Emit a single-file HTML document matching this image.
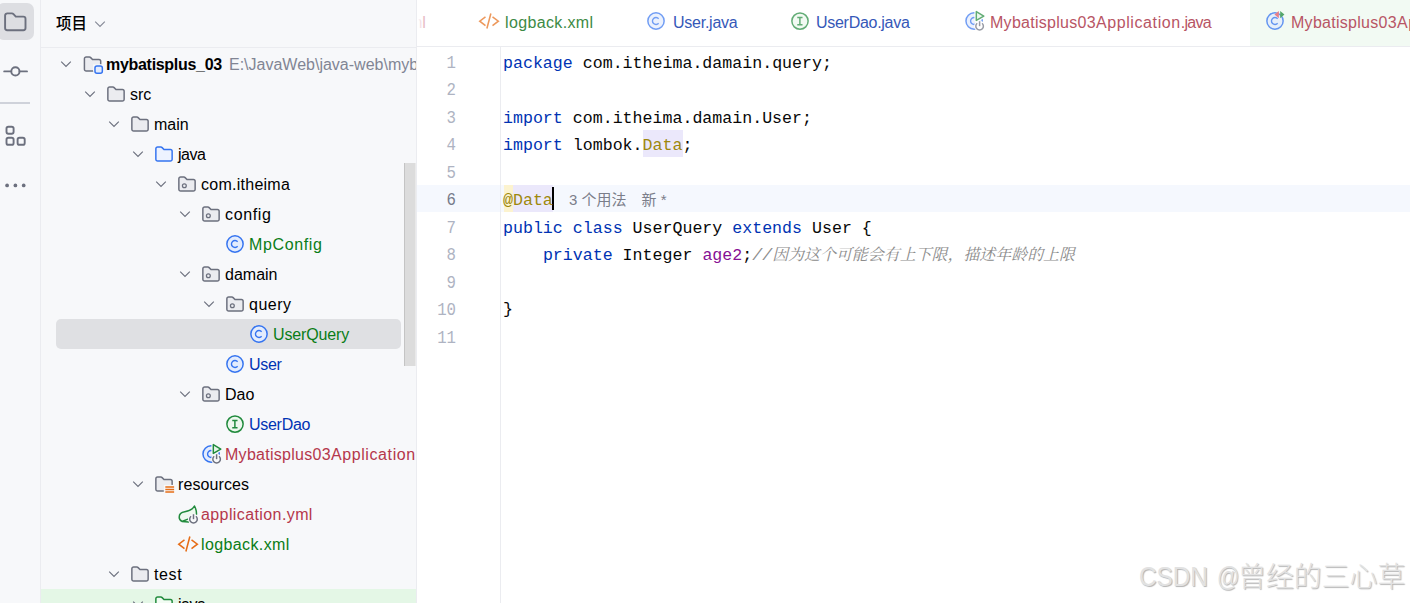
<!DOCTYPE html>
<html><head><meta charset="utf-8"><title>IDE</title>
<style>
*{box-sizing:border-box;margin:0;padding:0}
html,body{width:1410px;height:603px;overflow:hidden;background:#fff}
body{position:relative;font-family:"Liberation Sans","Noto Sans CJK SC",sans-serif;}
.ic{position:absolute;overflow:visible}
#strip{position:absolute;left:0;top:0;width:41px;height:603px;background:#f7f8fa;border-right:1px solid #ebecf0}
#proj{position:absolute;left:41px;top:0;width:376px;height:603px;background:#f7f8fa;border-right:1px solid #ebecf0;overflow:hidden}
#projhead{position:absolute;left:0;top:0;width:376px;height:48px;border-bottom:1px solid #ebecf0}
#ed{position:absolute;left:417px;top:0;width:993px;height:603px;background:#fff;overflow:hidden}
.t{position:absolute;white-space:nowrap;font-size:16px;line-height:30px;height:30px;letter-spacing:0px}
.code{position:absolute;white-space:pre;font-family:"Liberation Mono","Noto Sans CJK SC",monospace;font-size:16.62px;line-height:27.5px;height:27.5px;left:503px;color:#080808}
.ln{position:absolute;width:40px;text-align:right;font-family:"Liberation Mono",monospace;font-size:15.7px;line-height:28px;height:28px;left:416px;color:#aeb3c2;transform:scaleY(1.16);transform-origin:50% 50%}
.kw{color:#0033b3}.an{color:#9e880d}.fld{color:#871094}.cm{color:#8c8c8c;font-style:italic}.cj{font-family:"Noto Serif CJK SC",serif;font-size:15.95px;-webkit-text-stroke:0;line-height:0}
.tab{position:absolute;top:0;height:46px;line-height:45px;font-size:16px;white-space:nowrap}
</style></head><body>

<div id="strip"></div>
<div style="position:absolute;left:-3px;top:3px;width:37px;height:37px;border-radius:7px;background:#dddee2"></div>
<svg class="ic" style="left:0;top:0" width="41" height="200" viewBox="0 0 41 200" fill="none" stroke="#6c707e" stroke-width="1.9"><path d="M5.100 15.600 a2.200 2.200 0 0 1 2.200-2.200 h4.600 a2.200 2.200 0 0 1 1.600 0.700 l2.300 2.500 h7.500 a2.200 2.200 0 0 1 2.200 2.200 v9.200 a2.200 2.200 0 0 1-2.200 2.200 h-16 a2.200 2.200 0 0 1-2.200-2.200z"/><path d="M4.200 71.400h7M19.600 71.400h7.400" stroke-linecap="round"/><circle cx="15.400" cy="71.400" r="4.100"/><rect x="6.500" y="126.700" width="7.100" height="7" rx="1.900"/><rect x="6.500" y="137.800" width="7.100" height="7" rx="1.900"/><rect x="17.600" y="137.800" width="7.100" height="7" rx="1.900"/><g fill="#6c707e" stroke="none"><circle cx="7.100" cy="185.400" r="1.850"/><circle cx="15.400" cy="185.400" r="1.850"/><circle cx="23.700" cy="185.400" r="1.850"/></g></svg>
<div style="position:absolute;left:0;top:102px;width:30px;height:2px;background:#cfd2da"></div>
<div id="proj"><div id="projhead"></div>
<div style="position:absolute;left:0;top:589px;width:376px;height:14px;background:#e4f7e6"></div>
<div style="position:absolute;left:15px;top:319px;width:345px;height:30px;border-radius:5px;background:#dfe0e3"></div>
<div style="position:absolute;left:363px;top:163px;width:12px;height:203px;background:#dcdcdc;border-left:1px solid #c4c4c4;border-right:1px solid #e9e9e9"></div>
</div>
<div class="t" style="left:56px;top:9px;color:#000;font-size:15.5px;font-weight:500">项目</div>
<svg class="ic" style="left:92px;top:15.5px" width="16" height="16" viewBox="0 0 16 16"><path d="M3.200 5.700 L8 10.500 L12.800 5.700" fill="none" stroke="#868a97" stroke-width="1.150"/></svg>
<svg class="ic" style="left:58px;top:56px" width="16" height="16" viewBox="0 0 16 16"><path d="M3.200 5.700 L8 10.500 L12.800 5.700" fill="none" stroke="#6c707e" stroke-width="1.150"/></svg>
<svg class="ic" style="left:82px;top:53px;opacity:1" width="22" height="22" viewBox="0 0 20 20"><path d="M10.2 16.300 h-6.400 a1.600 1.600 0 0 1-1.600-1.600 v-9.400 a1.600 1.600 0 0 1 1.600-1.600 h2.900 a1.600 1.600 0 0 1 1.200 0.500 l1.700 1.800 h5.800 a1.600 1.600 0 0 1 1.600 1.600 v2.700" fill="#ebecf0" stroke="#6c707e" stroke-width="1.35"/><path d="M10 16.300v-6h7v6z" fill="#f7f8fa"/><rect x="11.800" y="11.800" width="6.700" height="6.600" rx="1.800" fill="#e3ecfd" stroke="#3574f0" stroke-width="1.35"/></svg>
<div class="t" style="left:106px;top:50px;color:#000;font-weight:bold;letter-spacing:-0.3px;">mybatisplus_03</div>
<svg class="ic" style="left:82px;top:86px" width="16" height="16" viewBox="0 0 16 16"><path d="M3.200 5.700 L8 10.500 L12.800 5.700" fill="none" stroke="#6c707e" stroke-width="1.150"/></svg>
<svg class="ic" style="left:105px;top:83px;opacity:1" width="22" height="22" viewBox="0 0 20 20"><path d="M2.6 5.3 a1.6 1.6 0 0 1 1.6-1.6 h2.9 a1.6 1.6 0 0 1 1.2 0.5 l1.7 1.8 h5.800 a1.600 1.600 0 0 1 1.600 1.600 v7.100 a1.600 1.600 0 0 1-1.600 1.600 h-11.600 a1.600 1.600 0 0 1-1.600-1.600z" fill="#ebecf0" stroke="#6c707e" stroke-width="1.35"/></svg>
<div class="t" style="left:130px;top:80px;color:#000;">src</div>
<svg class="ic" style="left:106px;top:116px" width="16" height="16" viewBox="0 0 16 16"><path d="M3.200 5.700 L8 10.500 L12.800 5.700" fill="none" stroke="#6c707e" stroke-width="1.150"/></svg>
<svg class="ic" style="left:129px;top:113px;opacity:1" width="22" height="22" viewBox="0 0 20 20"><path d="M2.6 5.3 a1.6 1.6 0 0 1 1.6-1.6 h2.9 a1.6 1.6 0 0 1 1.2 0.5 l1.7 1.8 h5.800 a1.600 1.600 0 0 1 1.600 1.600 v7.100 a1.600 1.600 0 0 1-1.600 1.600 h-11.600 a1.600 1.600 0 0 1-1.600-1.600z" fill="#ebecf0" stroke="#6c707e" stroke-width="1.35"/></svg>
<div class="t" style="left:154px;top:110px;color:#000;">main</div>
<svg class="ic" style="left:130px;top:146px" width="16" height="16" viewBox="0 0 16 16"><path d="M3.200 5.700 L8 10.500 L12.800 5.700" fill="none" stroke="#6c707e" stroke-width="1.150"/></svg>
<svg class="ic" style="left:153px;top:143px;opacity:1" width="22" height="22" viewBox="0 0 20 20"><path d="M2.6 5.3 a1.6 1.6 0 0 1 1.6-1.6 h2.9 a1.6 1.6 0 0 1 1.2 0.5 l1.7 1.8 h5.800 a1.600 1.600 0 0 1 1.600 1.600 v7.100 a1.600 1.600 0 0 1-1.600 1.600 h-11.600 a1.600 1.600 0 0 1-1.600-1.600z" fill="#edf3ff" stroke="#3574f0" stroke-width="1.35"/></svg>
<div class="t" style="left:178px;top:140px;color:#000;letter-spacing:-0.5px;">java</div>
<svg class="ic" style="left:153px;top:176px" width="16" height="16" viewBox="0 0 16 16"><path d="M3.200 5.700 L8 10.500 L12.800 5.700" fill="none" stroke="#6c707e" stroke-width="1.150"/></svg>
<svg class="ic" style="left:176px;top:173px;opacity:1" width="22" height="22" viewBox="0 0 20 20"><path d="M2.6 5.3 a1.6 1.6 0 0 1 1.6-1.6 h2.9 a1.6 1.6 0 0 1 1.2 0.5 l1.7 1.8 h5.800 a1.600 1.600 0 0 1 1.600 1.600 v7.100 a1.600 1.600 0 0 1-1.600 1.600 h-11.600 a1.600 1.600 0 0 1-1.600-1.600z" fill="#ebecf0" stroke="#6c707e" stroke-width="1.35"/><circle cx="7.6" cy="11.6" r="1.75" fill="none" stroke="#6c707e" stroke-width="1.15"/></svg>
<div class="t" style="left:201px;top:170px;color:#000;letter-spacing:0.26px;">com.itheima</div>
<svg class="ic" style="left:177px;top:206px" width="16" height="16" viewBox="0 0 16 16"><path d="M3.200 5.700 L8 10.500 L12.800 5.700" fill="none" stroke="#6c707e" stroke-width="1.150"/></svg>
<svg class="ic" style="left:200px;top:203px;opacity:1" width="22" height="22" viewBox="0 0 20 20"><path d="M2.6 5.3 a1.6 1.6 0 0 1 1.6-1.6 h2.9 a1.6 1.6 0 0 1 1.2 0.5 l1.7 1.8 h5.800 a1.600 1.600 0 0 1 1.600 1.600 v7.100 a1.600 1.600 0 0 1-1.600 1.600 h-11.600 a1.600 1.600 0 0 1-1.600-1.600z" fill="#ebecf0" stroke="#6c707e" stroke-width="1.35"/><circle cx="7.6" cy="11.6" r="1.75" fill="none" stroke="#6c707e" stroke-width="1.15"/></svg>
<div class="t" style="left:225px;top:200px;color:#000;letter-spacing:0.65px;">config</div>
<svg class="ic" style="left:224px;top:233px;opacity:1" width="22" height="22" viewBox="0 0 20 20"><circle cx="10" cy="10" r="7.4" fill="#e3ecfd" stroke="#3574f0" stroke-width="1.35"/><path d="M12.400 7.900 a3.200 3.200 0 1 0 0 4.200" fill="none" stroke="#3574f0" stroke-width="1.25"/></svg>
<div class="t" style="left:249px;top:230px;color:#0a7d17;letter-spacing:0.64px;">MpConfig</div>
<svg class="ic" style="left:177px;top:266px" width="16" height="16" viewBox="0 0 16 16"><path d="M3.200 5.700 L8 10.500 L12.800 5.700" fill="none" stroke="#6c707e" stroke-width="1.150"/></svg>
<svg class="ic" style="left:200px;top:263px;opacity:1" width="22" height="22" viewBox="0 0 20 20"><path d="M2.6 5.3 a1.6 1.6 0 0 1 1.6-1.6 h2.9 a1.6 1.6 0 0 1 1.2 0.5 l1.7 1.8 h5.800 a1.600 1.600 0 0 1 1.600 1.600 v7.100 a1.600 1.600 0 0 1-1.600 1.600 h-11.600 a1.600 1.600 0 0 1-1.600-1.600z" fill="#ebecf0" stroke="#6c707e" stroke-width="1.35"/><circle cx="7.6" cy="11.6" r="1.75" fill="none" stroke="#6c707e" stroke-width="1.15"/></svg>
<div class="t" style="left:225px;top:260px;color:#000;">damain</div>
<svg class="ic" style="left:201px;top:296px" width="16" height="16" viewBox="0 0 16 16"><path d="M3.200 5.700 L8 10.500 L12.800 5.700" fill="none" stroke="#6c707e" stroke-width="1.150"/></svg>
<svg class="ic" style="left:224px;top:293px;opacity:1" width="22" height="22" viewBox="0 0 20 20"><path d="M2.6 5.3 a1.6 1.6 0 0 1 1.6-1.6 h2.9 a1.6 1.6 0 0 1 1.2 0.5 l1.7 1.8 h5.800 a1.600 1.600 0 0 1 1.600 1.600 v7.100 a1.600 1.600 0 0 1-1.600 1.600 h-11.600 a1.600 1.600 0 0 1-1.600-1.600z" fill="#ebecf0" stroke="#6c707e" stroke-width="1.35"/><circle cx="7.6" cy="11.6" r="1.75" fill="none" stroke="#6c707e" stroke-width="1.15"/></svg>
<div class="t" style="left:249px;top:290px;color:#000;letter-spacing:0.5px;">query</div>
<svg class="ic" style="left:248px;top:323px;opacity:1" width="22" height="22" viewBox="0 0 20 20"><circle cx="10" cy="10" r="7.4" fill="#e3ecfd" stroke="#3574f0" stroke-width="1.35"/><path d="M12.400 7.900 a3.200 3.200 0 1 0 0 4.200" fill="none" stroke="#3574f0" stroke-width="1.25"/></svg>
<div class="t" style="left:273px;top:320px;color:#0a7d17;letter-spacing:-0.15px;">UserQuery</div>
<svg class="ic" style="left:224px;top:353px;opacity:1" width="22" height="22" viewBox="0 0 20 20"><circle cx="10" cy="10" r="7.4" fill="#e3ecfd" stroke="#3574f0" stroke-width="1.35"/><path d="M12.400 7.900 a3.200 3.200 0 1 0 0 4.200" fill="none" stroke="#3574f0" stroke-width="1.25"/></svg>
<div class="t" style="left:249px;top:350px;color:#0033b3;letter-spacing:-0.3px;">User</div>
<svg class="ic" style="left:177px;top:386px" width="16" height="16" viewBox="0 0 16 16"><path d="M3.200 5.700 L8 10.500 L12.800 5.700" fill="none" stroke="#6c707e" stroke-width="1.150"/></svg>
<svg class="ic" style="left:200px;top:383px;opacity:1" width="22" height="22" viewBox="0 0 20 20"><path d="M2.6 5.3 a1.6 1.6 0 0 1 1.6-1.6 h2.9 a1.6 1.6 0 0 1 1.2 0.5 l1.7 1.8 h5.800 a1.600 1.600 0 0 1 1.600 1.600 v7.100 a1.600 1.600 0 0 1-1.600 1.600 h-11.600 a1.600 1.600 0 0 1-1.600-1.600z" fill="#ebecf0" stroke="#6c707e" stroke-width="1.35"/><circle cx="7.6" cy="11.6" r="1.75" fill="none" stroke="#6c707e" stroke-width="1.15"/></svg>
<div class="t" style="left:225px;top:380px;color:#000;">Dao</div>
<svg class="ic" style="left:224px;top:413px;opacity:1" width="22" height="22" viewBox="0 0 20 20"><circle cx="10" cy="10.100" r="7.400" fill="#edf8ee" stroke="#208a3c" stroke-width="1.35"/><path d="M7.500 6.800h4.800M7.500 13.400h4.800M9.900 6.800v6.600" fill="none" stroke="#208a3c" stroke-width="1.350"/></svg>
<div class="t" style="left:249px;top:410px;color:#0033b3;letter-spacing:-0.28px;">UserDao</div>
<svg class="ic" style="left:200px;top:443px;opacity:1" width="22" height="22" viewBox="0 0 20 20"><circle cx="10.100" cy="10" r="7.400" fill="#e3ecfd" stroke="#3574f0" stroke-width="1.35"/><path d="M12.500 7.900 a3.200 3.200 0 1 0 0 4.200" fill="none" stroke="#3574f0" stroke-width="1.250"/><path d="M12.100 1.400V9.500L18.900 5.500z" fill="#f7f8fa" stroke="#f7f8fa" stroke-width="3.400" stroke-linejoin="round"/><path d="M12.100 1.400V9.500L18.900 5.500z" fill="#e6f5e8" stroke="#208a3c" stroke-width="1.35" stroke-linejoin="round"/><circle cx="15.1" cy="14.7" r="5" fill="#f7f8fa"/><path d="M17.32 12.06 A3.45 3.45 0 1 1 12.88 12.06" fill="none" stroke="#6c707e" stroke-width="1.35"/><path d="M15.1 10.2V14.7" stroke="#6c707e" stroke-width="1.35"/></svg>
<div class="t" style="left:225px;top:440px;color:#b5374b;letter-spacing:0.42px;"><span style="letter-spacing:0.28px">Mybatisplus03</span><span style="letter-spacing:0.6px">Application</span></div>
<svg class="ic" style="left:130px;top:476px" width="16" height="16" viewBox="0 0 16 16"><path d="M3.200 5.700 L8 10.500 L12.800 5.700" fill="none" stroke="#6c707e" stroke-width="1.150"/></svg>
<svg class="ic" style="left:153px;top:473px;opacity:1" width="22" height="22" viewBox="0 0 20 20"><path d="M9.900 16.300 h-5.700 a1.600 1.600 0 0 1-1.600-1.600 v-9.400 a1.600 1.600 0 0 1 1.600-1.600 h2.900 a1.600 1.600 0 0 1 1.200 0.500 l1.700 1.800 h5.800 a1.600 1.600 0 0 1 1.600 1.600 v3.200" fill="#ebecf0" stroke="#6c707e" stroke-width="1.35"/><path d="M9.900 17v-6.200h8v6.200z" fill="#f7f8fa"/><path d="M11.200 12.700h8M11.200 15h8M11.200 17.300h8" stroke="#e66d17" stroke-width="1.35"/></svg>
<div class="t" style="left:178px;top:470px;color:#000;letter-spacing:0.1px;">resources</div>
<svg class="ic" style="left:176px;top:503px;opacity:1" width="22" height="22" viewBox="0 0 20 20"><path d="M16.800 2.700 C15.500 5.500 12 7.300 8 8 C4.500 8.600 2.900 10.800 2.900 12.900 C2.900 14.600 4 16 5.400 16.800 L11.400 17.300 L18 13 C18.600 11 18.500 6 16.800 2.700z" fill="#eef9ef"/><path d="M10.800 14.700 L5.400 16.800 L11.400 17.300 M5.400 16.800 C4 16 2.900 14.600 2.900 12.900 C2.900 10.800 4.500 8.600 8 8 C12 7.300 15.500 5.500 16.800 2.700 C18 5 18.800 7.500 18.600 10.500" fill="none" stroke="#208a3c" stroke-width="1.35" stroke-linejoin="round" stroke-linecap="round"/><circle cx="15.9" cy="14.7" r="5" fill="#f7f8fa"/><path d="M18.12 12.06 A3.45 3.45 0 1 1 13.68 12.06" fill="none" stroke="#6c707e" stroke-width="1.35"/><path d="M15.9 10.2V14.7" stroke="#6c707e" stroke-width="1.35"/></svg>
<div class="t" style="left:201px;top:500px;color:#b5374b;letter-spacing:0.4px;">application.yml</div>
<svg class="ic" style="left:176px;top:533px;opacity:1" width="22" height="22" viewBox="0 0 20 20"><path d="M7.700 6.300 L2.500 10.200 L7.700 14.200 M14.100 6.300 L19.400 10.200 L14.100 14.200 M12.600 3.200 L9 16.800" fill="none" stroke="#e66d17" stroke-width="1.400"/></svg>
<div class="t" style="left:201px;top:530px;color:#0a7d17;letter-spacing:0.38px;">logback.xml</div>
<svg class="ic" style="left:106px;top:566px" width="16" height="16" viewBox="0 0 16 16"><path d="M3.200 5.700 L8 10.500 L12.800 5.700" fill="none" stroke="#6c707e" stroke-width="1.150"/></svg>
<svg class="ic" style="left:129px;top:563px;opacity:1" width="22" height="22" viewBox="0 0 20 20"><path d="M2.6 5.3 a1.6 1.6 0 0 1 1.6-1.6 h2.9 a1.6 1.6 0 0 1 1.2 0.5 l1.7 1.8 h5.800 a1.600 1.600 0 0 1 1.600 1.600 v7.100 a1.600 1.600 0 0 1-1.600 1.600 h-11.600 a1.600 1.600 0 0 1-1.600-1.600z" fill="#ebecf0" stroke="#6c707e" stroke-width="1.35"/></svg>
<div class="t" style="left:154px;top:560px;color:#000;letter-spacing:0.6px;">test</div>
<svg class="ic" style="left:130px;top:596px" width="16" height="16" viewBox="0 0 16 16"><path d="M3.200 5.700 L8 10.500 L12.800 5.700" fill="none" stroke="#6c707e" stroke-width="1.150"/></svg>
<svg class="ic" style="left:153px;top:593px;opacity:1" width="22" height="22" viewBox="0 0 20 20"><path d="M2.6 5.3 a1.6 1.6 0 0 1 1.6-1.6 h2.9 a1.6 1.6 0 0 1 1.2 0.5 l1.7 1.8 h5.800 a1.600 1.600 0 0 1 1.600 1.600 v7.100 a1.600 1.600 0 0 1-1.600 1.600 h-11.600 a1.600 1.600 0 0 1-1.600-1.600z" fill="#f2fcf3" stroke="#208a3c" stroke-width="1.35"/></svg>
<div class="t" style="left:178px;top:590px;color:#000;letter-spacing:-0.5px;">java</div>
<div class="t" style="left:229px;top:50px;color:#818594;width:187px;overflow:hidden">E:\JavaWeb\java-web\mybatisplus</div>
<div id="ed"></div>
<div style="position:absolute;left:417px;top:46px;width:993px;height:1px;background:#ebecf0"></div>
<div style="position:absolute;left:1250px;top:0;width:160px;height:46px;background:#f2faf3"></div>
<div style="position:absolute;left:417px;top:185px;width:993px;height:27px;background:#f5f8fe"></div>
<div style="position:absolute;left:504px;top:185px;width:9px;height:27px;background:#fcf3cf"></div>
<div style="position:absolute;left:513px;top:185px;width:40px;height:27px;background:#ebe8fb"></div>
<div style="position:absolute;left:643px;top:130px;width:40px;height:26.5px;background:#ebe8fb"></div>
<div style="position:absolute;left:552px;top:187px;width:2px;height:23px;background:#000"></div>
<div style="position:absolute;left:500px;top:47px;width:1px;height:556px;background:#ebecf0"></div>
<div class="tab" style="left:417px;color:#e8b9c0;width:8.5px;overflow:hidden"><span style="position:relative;left:-8px">ml</span></div>
<div style="position:absolute;left:417px;top:8px;width:7px;height:30px;background:linear-gradient(to right,#fff 15%,rgba(255,255,255,0))"></div>
<svg class="ic" style="left:477px;top:9.8px;opacity:0.7" width="22" height="22" viewBox="0 0 20 20"><path d="M7.700 6.300 L2.500 10.200 L7.700 14.200 M14.100 6.300 L19.400 10.200 L14.100 14.200 M12.600 3.200 L9 16.800" fill="none" stroke="#e66d17" stroke-width="1.400"/></svg>
<div class="tab" style="left:505px;color:#3d8a45;letter-spacing:0.36px">logback.xml</div>
<svg class="ic" style="left:645px;top:9.8px;opacity:0.7" width="22" height="22" viewBox="0 0 20 20"><circle cx="10" cy="10" r="7.4" fill="#e3ecfd" stroke="#3574f0" stroke-width="1.35"/><path d="M12.400 7.900 a3.200 3.200 0 1 0 0 4.200" fill="none" stroke="#3574f0" stroke-width="1.25"/></svg>
<div class="tab" style="left:673px;color:#3558b8;letter-spacing:-0.25px">User.java</div>
<svg class="ic" style="left:789px;top:9.8px;opacity:0.7" width="22" height="22" viewBox="0 0 20 20"><circle cx="10" cy="10.100" r="7.400" fill="#edf8ee" stroke="#208a3c" stroke-width="1.35"/><path d="M7.500 6.800h4.800M7.500 13.400h4.800M9.900 6.800v6.600" fill="none" stroke="#208a3c" stroke-width="1.350"/></svg>
<div class="tab" style="left:816px;color:#3558b8;letter-spacing:-0.28px">UserDao.java</div>
<svg class="ic" style="left:963px;top:9.8px;opacity:0.7" width="22" height="22" viewBox="0 0 20 20"><circle cx="10.100" cy="10" r="7.400" fill="#e3ecfd" stroke="#3574f0" stroke-width="1.35"/><path d="M12.500 7.900 a3.200 3.200 0 1 0 0 4.200" fill="none" stroke="#3574f0" stroke-width="1.250"/><path d="M12.100 1.400V9.500L18.900 5.500z" fill="#fff" stroke="#fff" stroke-width="3.400" stroke-linejoin="round"/><path d="M12.100 1.400V9.500L18.900 5.500z" fill="#e6f5e8" stroke="#208a3c" stroke-width="1.35" stroke-linejoin="round"/><circle cx="15.1" cy="14.7" r="5" fill="#fff"/><path d="M17.32 12.06 A3.45 3.45 0 1 1 12.88 12.06" fill="none" stroke="#6c707e" stroke-width="1.35"/><path d="M15.1 10.2V14.7" stroke="#6c707e" stroke-width="1.35"/></svg>
<div class="tab" style="left:990px;color:#b85565;letter-spacing:0.28px">Mybatisplus03<span style="letter-spacing:0.6px">Application</span><span style="letter-spacing:-0.75px">.java</span></div>
<svg class="ic" style="left:1264px;top:9.8px;opacity:0.75" width="22" height="22" viewBox="0 0 20 20"><circle cx="10" cy="10" r="7.400" fill="#e3ecfd" stroke="#3574f0" stroke-width="1.35"/><path d="M12.400 7.900 a3.200 3.200 0 1 0 0 4.200" fill="none" stroke="#3574f0" stroke-width="1.250"/><path d="M14.700 1v6.400l3.900-3.200z" fill="#208a3c"/><path d="M13.500 1v6.400l-4-3.200z" fill="#e55765"/></svg>
<div class="tab" style="left:1291px;color:#b85565;letter-spacing:0.28px">Mybatisplus03<span style="letter-spacing:0.6px">ApplicationTests</span></div>
<div class="ln" style="top:49px;color:#aeb3c2">1</div>
<div class="code" style="top:50px"><span class="kw">package</span> com.itheima.damain.query;</div>
<div class="ln" style="top:76px;color:#aeb3c2">2</div>
<div class="ln" style="top:104px;color:#aeb3c2">3</div>
<div class="code" style="top:105px"><span class="kw">import</span> com.itheima.damain.User;</div>
<div class="ln" style="top:131px;color:#aeb3c2">4</div>
<div class="code" style="top:132px"><span class="kw">import</span> lombok.<span class="an">Data</span>;</div>
<div class="ln" style="top:159px;color:#aeb3c2">5</div>
<div class="ln" style="top:186px;color:#767a8a">6</div>
<div class="code" style="top:187px"><span class="an">@Data</span></div>
<div class="ln" style="top:214px;color:#aeb3c2">7</div>
<div class="code" style="top:215px"><span class="kw">public class</span> UserQuery <span class="kw">extends</span> User {</div>
<div class="ln" style="top:241px;color:#aeb3c2">8</div>
<div class="code" style="top:242px">    <span class="kw">private</span> Integer <span class="fld">age2</span>;<span class="cm">//<span class="cj">因为这个可能会有上下限，描述年龄的上限</span></span></div>
<div class="ln" style="top:269px;color:#aeb3c2">9</div>
<div class="ln" style="top:296px;color:#aeb3c2">10</div>
<div class="code" style="top:296px">}</div>
<div class="ln" style="top:324px;color:#aeb3c2">11</div>
<div class="t" style="left:569px;top:186px;color:#7b7e8a;font-size:15px;line-height:27px">3 个用法</div>
<div class="t" style="left:641.5px;top:186px;color:#7b7e8a;font-size:15px;line-height:27px">新 *</div>
<div style="position:absolute;white-space:nowrap;line-height:36px;color:#e2e2e2;text-shadow:1px 1px 1px #b4b4b4;transform-origin:0 50%;left:1138.5px;top:559.4px;font-size:27.8px;transform:scaleX(0.875)">CSDN</div>
<div style="position:absolute;white-space:nowrap;line-height:36px;color:#e2e2e2;text-shadow:1px 1px 1px #b4b4b4;transform-origin:0 50%;left:1217px;top:559.4px;font-size:27.8px;transform:scaleX(0.8)">@</div>
<div style="position:absolute;white-space:nowrap;line-height:36px;color:#e2e2e2;text-shadow:1px 1px 1px #b4b4b4;transform-origin:0 50%;left:1238px;top:557.2px;font-size:27.9px;font-weight:300;font-family:'Noto Sans CJK SC',sans-serif">曾经的三心草</div>
</body></html>
